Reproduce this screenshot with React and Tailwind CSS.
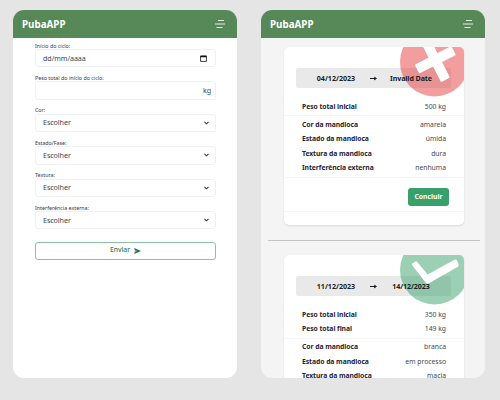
import React from "react";

function Header() {
  return (
    <header className="flex h-[28px] shrink-0 items-center justify-between bg-[#578858] pl-[9px] pr-[12px]">
      <span className="pt-px text-[9.8px] leading-none font-bold text-white">PubaAPP</span>
      <svg className="h-[10px] w-[10px]" viewBox="0 0 10 10" stroke="#e0f2dd" strokeWidth="1.2">
        <path d="M3 1.5H9M0 5H10M1.5 8.5H7.5" />
      </svg>
    </header>
  );
}

function Phone({ className, children }) {
  return (
    <section className={"flex h-[368px] w-[224px] flex-col overflow-hidden rounded-[11px] " + className}>
      <Header />
      {children}
    </section>
  );
}

function Chevron() {
  return (
    <svg className="h-[4px] w-[5px]" viewBox="0 0 5 4" fill="none" stroke="#2d3748" strokeWidth="1.1">
      <path d="M.5 .8L2.5 2.8L4.5 .8" />
    </svg>
  );
}

function Field({ label, value, children }) {
  return (
    <label className="flex h-[32.4px] flex-col">
      <span className="flex h-[14px] items-end text-[5.3px] leading-none whitespace-nowrap text-[#2d3748]">
        {label}
      </span>
      <span className="flex h-[18.4px] items-center justify-between rounded-[3px] border border-[#edf1f5] pl-[7px] pr-[6px] text-[7.1px] leading-none tracking-[-0.05px] text-[#3c4552]">
        <span>{value}</span>
        {children}
      </span>
    </label>
  );
}

function FormScreen() {
  return (
    <form className="-mt-[3px] flex flex-col pl-[22px] pr-[21px]" onSubmit={(e) => e.preventDefault()}>
      <Field label="Início do ciclo:" value="dd/mm/aaaa">
        <svg className="mr-[2px] h-[7px] w-[7px]" viewBox="0 0 7 7" fill="none" stroke="#111" strokeWidth=".8">
          <path d="M.6 1H6.4V6.4H.6Z" />
          <path d="M.6 1.5H6.4" strokeWidth="1.6" />
        </svg>
      </Field>
      <Field label="Peso total do início do ciclo:" value="">
        <span className="-mr-[2px]">kg</span>
      </Field>
      <Field label="Cor:" value="Escolher"><Chevron /></Field>
      <Field label="Estado/Fase:" value="Escolher"><Chevron /></Field>
      <Field label="Textura:" value="Escolher"><Chevron /></Field>
      <Field label="Interferência externa:" value="Escolher"><Chevron /></Field>
      <button className="mt-[12.5px] flex h-[18px] items-center justify-center gap-[4px] rounded-[3px] border border-[#8fbfa5] text-[6.8px] leading-none font-medium text-[#2f7d55]">
        Enviar
        <svg className="h-[6px] w-[7px]" viewBox="0 0 7 6" fill="#27734c">
          <path d="M.3 0L7 3L.3 6L.8 3.5L3.6 3L.8 2.5Z" />
        </svg>
      </button>
    </form>
  );
}

function Stamp({ done }) {
  return (
    <svg className="absolute top-0 right-0 h-[50px] w-[64px]" viewBox="0 0 64 50">
      <circle cx="34.5" cy="15" r="34.5" fill={done ? "#38a169" : "#e53e3e"} fillOpacity=".5" />
      {done ? (
        <path
          d="M12.2 8.4L15.5 6.4Q16.5 6 17.2 7L27.7 19.5L54.5 4.8Q56 4.2 57 5.6L58.6 9.5Q59 11 57.5 12L28.5 28.6Q27 29.2 26 28L12 10Q11.5 9 12.2 8.4Z"
          fill="#fff"
        />
      ) : (
        <g transform="translate(35.3 12.8) rotate(-27)" fill="#fff">
          <rect x="-20.5" y="-5" width="41" height="10" rx="1" />
          <rect x="-5" y="-22.5" width="10" height="45" rx="1" />
        </g>
      )}
    </svg>
  );
}

function Rows({ items, className }) {
  return (
    <dl className={"flex flex-col border-b border-[#f3f5f8] pl-[18px] pr-[18px] " + className}>
      {items.map(([name, value]) => (
        <div key={name} className="flex h-[14.5px] items-center justify-between text-[6.8px] leading-none whitespace-nowrap">
          <dt className="font-bold tracking-[-0.06px] text-[#1f2533]">{name}</dt>
          <dd className="text-[#414854]">{value}</dd>
        </div>
      ))}
    </dl>
  );
}

function Card({ done, start, end, weights, traits, className, children }) {
  return (
    <article className={"relative ml-[23px] w-[180px] shrink-0 overflow-hidden rounded-[5px] bg-white shadow-[0_1px_2px_rgba(0,0,0,0.12)] " + className}>
      <div className="mt-[20.5px] ml-[12px] h-[20.5px] w-[155px] rounded-[2px] bg-[#e9e9e9]" />
      <Stamp done={done} />
      <div className="relative -mt-[20.5px] ml-[12px] flex h-[20.5px] w-[155px] items-center pt-[1.5px] text-[7.1px] leading-none font-bold whitespace-nowrap text-[#1a1d26]">
        <span className="w-[80px] text-center">{start}</span>
        <svg className="-ml-[6px] h-[5px] w-[7px]" viewBox="0 0 7 5" fill="#1a1d26">
          <path d="M0 1.9H4.2V.4L7 2.5L4.2 4.6V3.1H0Z" />
        </svg>
        <span className="w-[68px] text-center tracking-[-0.08px]">{end}</span>
      </div>
      <Rows className="pt-[12px] pb-[0.5px]" items={weights} />
      <Rows className="pt-[2px] pb-[1px]" items={traits} />
      {children}
    </article>
  );
}

export default function App() {
  return (
    <main className="flex h-[400px] w-[500px] items-start gap-[24px] overflow-hidden bg-[#e5e5e5] pt-[10px] pl-[13px] font-['Noto_Sans',sans-serif]">
      <Phone className="bg-white">
        <FormScreen />
      </Phone>
      <Phone className="bg-[#f4f4f4]">
        <div className="flex flex-col pt-[9px]">
          <Card
            className="h-[178px]"
            start="04/12/2023"
            end="Invalid Date"
            weights={[["Peso total inicial", "500 kg"]]}
            traits={[
              ["Cor da mandioca", "amarela"],
              ["Estado da mandioca", "úmida"],
              ["Textura da mandioca", "dura"],
              ["Interferência externa", "nenhuma"],
            ]}
          >
            <div className="flex h-[33.5px] items-center justify-end border-b border-[#f3f5f8] pr-[15px]">
              <button className="mt-[6px] h-[18px] w-[41px] rounded-[3px] bg-[#38a169] text-[6.8px] leading-none font-bold text-white">
                Concluir
              </button>
            </div>
          </Card>
          <hr className="mt-[14.5px] mr-[5px] ml-[7px] border-[#c4c4c4]" />
          <Card
            done
            className="mt-[14.5px] h-[140px]"
            start="11/12/2023"
            end="14/12/2023"
            weights={[["Peso total inicial", "350 kg"], ["Peso total final", "149 kg"]]}
            traits={[
              ["Cor da mandioca", "branca"],
              ["Estado da mandioca", "em processo"],
              ["Textura da mandioca", "macia"],
            ]}
          />
        </div>
      </Phone>
    </main>
  );
}
